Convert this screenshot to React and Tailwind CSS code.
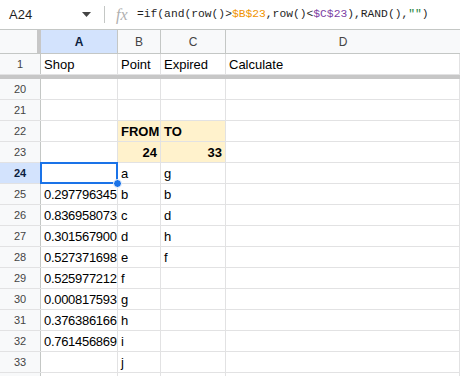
const rows = [
  { n: 20 },
  { n: 21 },
  { n: 22, b: "FROM", c: "TO", yellow: true, bold: true },
  { n: 23, b: "24", c: "33", yellow: true, bold: true, right: true },
  { n: 24, b: "a", c: "g", selected: true },
  { n: 25, a: "0.297796345", b: "b", c: "b" },
  { n: 26, a: "0.836958073", b: "c", c: "d" },
  { n: 27, a: "0.301567900", b: "d", c: "h" },
  { n: 28, a: "0.527371698", b: "e", c: "f" },
  { n: 29, a: "0.525977212", b: "f" },
  { n: 30, a: "0.000817593", b: "g" },
  { n: 31, a: "0.376386166", b: "h" },
  { n: 32, a: "0.761456869", b: "i" },
  { n: 33, b: "j" },
  { n: 34, hidden: true },
];

const FormulaBar = () => (
  <div className="flex items-center h-[30px] border-b border-[#c4c7c5] bg-white">
    <div className="w-[72px] pl-[9px] text-[13px] text-[#1f1f1f]">A24</div>
    <svg width="9" height="5" viewBox="0 0 9 5" className="ml-[10px]">
      <path d="M0 0h9L4.5 5z" fill="#444" />
    </svg>
    <div className="ml-[13px] w-px h-[17px] bg-[#c4c7c5]" />
    <div className="ml-[11px] w-[22px] text-[16px] italic text-[#b0b0b0] font-['Liberation_Serif',serif] leading-none">
      fx
    </div>
    <div className="ml-[-1px] font-['Liberation_Mono',monospace] text-[11.3px] text-[#1f1f1f] whitespace-nowrap">
      =if(and(row()&gt;<span className="text-[#f09300]">$B$23</span>,row()&lt;
      <span className="text-[#7c3ea3]">$C$23</span>),RAND(),
      <span className="text-[#188038]">""</span>)
    </div>
  </div>
);

const Cell = ({ w, children, className = "" }) => (
  <div
    className={`${w} shrink-0 h-full border-r border-[#e2e2e3] px-[3px] flex items-end pb-0 overflow-hidden whitespace-nowrap ${className}`}
  >
    {children}
  </div>
);

export default function App() {
  return (
    <div className="w-[460px] h-[376px] overflow-hidden bg-white font-['Liberation_Sans',Arial,sans-serif] text-[13px] text-black">
      <FormulaBar />

      <div className="flex h-[24px] border-b border-[#c4c7c5] bg-[#f8f9fa] text-[12px] text-[#444]">
        <div className="w-[41px] shrink-0 border-r-4 border-[#c7c7c7]" />
        <div className="w-[77px] shrink-0 border-r border-[#c4c7c5] bg-[#d3e3fd] flex items-center justify-center font-bold text-[#0b1e3f]">
          A
        </div>
        <div className="w-[43px] shrink-0 border-r border-[#c4c7c5] flex items-center justify-center">B</div>
        <div className="w-[65px] shrink-0 border-r border-[#c4c7c5] flex items-center justify-center">C</div>
        <div className="flex-1 flex items-center justify-center">D</div>
      </div>

      <div className="flex h-[21px] border-b border-[#e2e2e3]">
        <div className="w-[41px] shrink-0 border-r border-[#c4c7c5] bg-[#f8f9fa] flex items-center justify-center text-[11px] text-[#444]">
          1
        </div>
        <Cell w="w-[77px]">Shop</Cell>
        <Cell w="w-[43px]">Point</Cell>
        <Cell w="w-[65px]">Expired</Cell>
        <Cell w="flex-1">Calculate</Cell>
      </div>
      <div className="h-[4px] bg-[#c7c7c7]" />

      {rows.map((r) => (
        <div key={r.n} className="flex h-[21px] border-b border-[#e2e2e3]">
          <div
            className={`w-[41px] shrink-0 border-r border-[#c4c7c5] flex items-center justify-center text-[11px] ${
              r.selected ? "bg-[#d3e3fd] font-bold text-[#0b1e3f]" : "bg-[#f8f9fa] text-[#444]"
            }`}
          >
            {r.hidden ? "" : r.n}
          </div>
          <Cell w="w-[77px]" className={`tracking-[-0.3px] ${r.selected ? "relative overflow-visible" : ""}`}>
            {r.a}
            {r.selected && (
              <>
                <div className="absolute left-[-1px] top-[-1px] w-[78px] h-[22px] border-2 border-[#1a73e8]" />
                <div className="absolute right-[-5px] bottom-[-5px] w-[9px] h-[9px] rounded-full bg-[#1a73e8] border border-white z-10" />
              </>
            )}
          </Cell>
          <Cell
            w="w-[43px]"
            className={`${r.yellow ? "bg-[#fff2cc]" : ""} ${r.bold ? "font-bold" : ""} ${r.right ? "justify-end" : ""}`}
          >
            {r.b}
          </Cell>
          <Cell
            w="w-[65px]"
            className={`${r.yellow ? "bg-[#fff2cc]" : ""} ${r.bold ? "font-bold" : ""} ${r.right ? "justify-end" : ""}`}
          >
            {r.c}
          </Cell>
          <Cell w="flex-1" />
        </div>
      ))}
    </div>
  );
}
